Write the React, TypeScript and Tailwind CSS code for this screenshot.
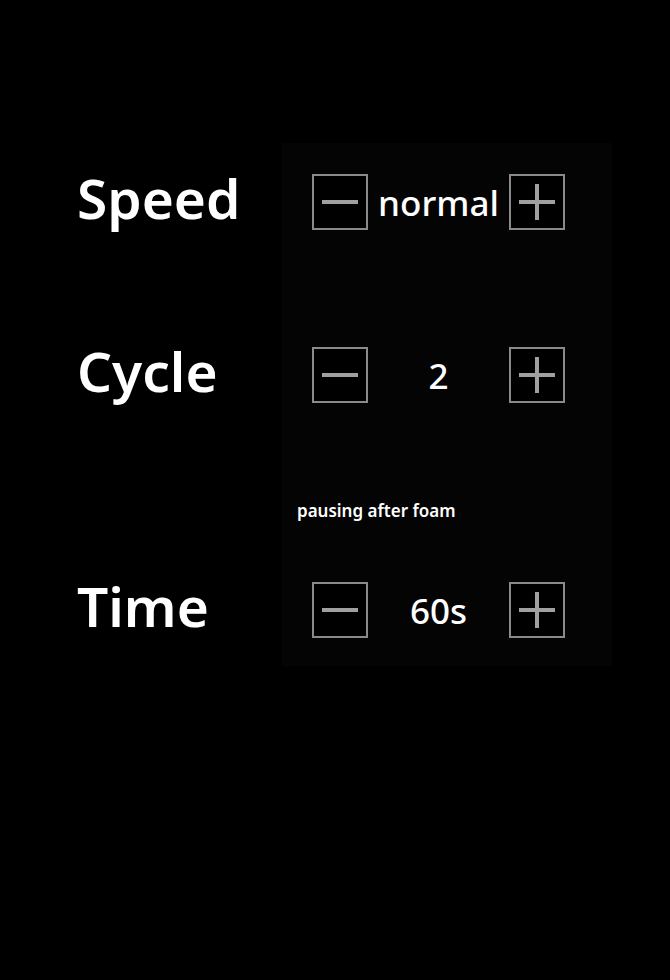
import React from "react";

function Minus() {
  return (
    <button className="w-[56px] h-[56px] border-2 border-[#8a8a8a] flex items-center justify-center bg-black">
      <span className="block w-[36px] h-[4px] bg-[#a0a0a0]" />
    </button>
  );
}

function Plus() {
  return (
    <button className="relative w-[56px] h-[56px] border-2 border-[#8a8a8a] flex items-center justify-center bg-black">
      <span className="absolute w-[36px] h-[4px] bg-[#a0a0a0]" />
      <span className="absolute w-[4px] h-[36px] bg-[#a0a0a0]" />
    </button>
  );
}

function Stepper({ value }: { value: string }) {
  return (
    <div className="flex items-center h-[56px]">
      <Minus />
      <div className="w-[141px] text-center text-white text-[35px] font-medium leading-none">{value}</div>
      <Plus />
    </div>
  );
}

export default function App() {
  const font = { fontFamily: '"Noto Sans", "Open Sans", sans-serif' };
  return (
    <div className="w-[670px] h-[980px] bg-black" style={font}>
      <div className="flex pt-[143px] pl-[77px]">
        {/* labels */}
        <div className="w-[205px] flex flex-col pt-[31px] text-white text-[55px] font-semibold">
          <div className="h-[56px] flex items-center -mt-[4px]">Speed</div>
          <div className="h-[56px] flex items-center mt-[117px] -mb-[4px]">Cycle</div>
          <div className="h-[56px] flex items-center mt-[183px]">Time</div>
        </div>
        {/* controls panel */}
        <div className="w-[330px] bg-[#040404] pl-[30px] pt-[31px] pb-[28px] flex flex-col">
          <Stepper value="normal" />
          <div className="mt-[117px]">
            <Stepper value="2" />
          </div>
          <div className="mt-[99px] -ml-[15px] text-white text-[17px] font-semibold leading-none">
            pausing after foam
          </div>
          <div className="mt-[63px]">
            <Stepper value="60s" />
          </div>
        </div>
      </div>
    </div>
  );
}
